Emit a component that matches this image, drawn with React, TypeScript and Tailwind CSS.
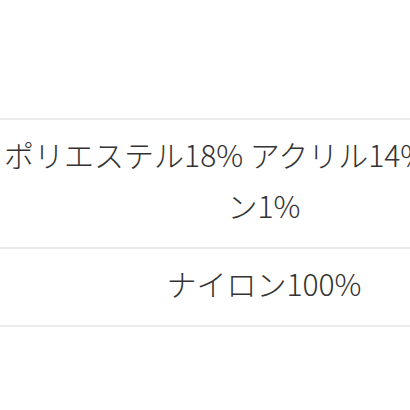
import React from 'react';

const rows = [
  'ポリエステル18% アクリル14% ナイロン1%',
  'ナイロン100%',
];

const App: React.FC = () => {
  return (
    <div className="w-[410px] h-[410px] overflow-hidden bg-white" style={{ fontFamily: '"Noto Sans CJK JP", "Noto Sans", sans-serif' }}>
      <div className="h-[118px]" />
      {/* composition rows */}
      <div className="border-t-2 border-[#ebebeb]">
        {rows.map((text, i) => (
          <div key={i} className="border-b-2 border-[#ebebeb] pt-[9px] pb-[16px]">
            <div className="w-[528px] text-center text-[30px] leading-[51px] font-light text-[#333] break-all">
              {text}
            </div>
          </div>
        ))}
      </div>
    </div>
  );
};

export default App;
